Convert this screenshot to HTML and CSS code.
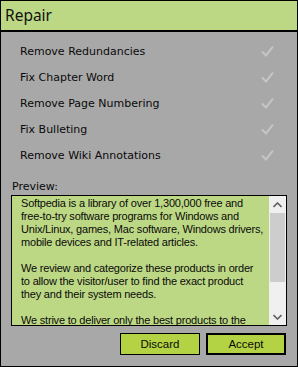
FILE: index.html
```html
<!DOCTYPE html>
<html>
<head>
<meta charset="utf-8">
<link rel="stylesheet" href="styles.css">
</head>
<body>
<div class="window">
  <div class="titlebar">Repair</div>
  <div class="options">
    <div class="option"><span>Remove Redundancies</span><svg class="check" width="13" height="12" viewBox="0 0 13 12"><polyline points="1,6.5 5,10.5 12,1.5" /></svg></div>
    <div class="option"><span>Fix Chapter Word</span><svg class="check" width="13" height="12" viewBox="0 0 13 12"><polyline points="1,6.5 5,10.5 12,1.5" /></svg></div>
    <div class="option"><span>Remove Page Numbering</span><svg class="check" width="13" height="12" viewBox="0 0 13 12"><polyline points="1,6.5 5,10.5 12,1.5" /></svg></div>
    <div class="option"><span>Fix Bulleting</span><svg class="check" width="13" height="12" viewBox="0 0 13 12"><polyline points="1,6.5 5,10.5 12,1.5" /></svg></div>
    <div class="option"><span>Remove Wiki Annotations</span><svg class="check" width="13" height="12" viewBox="0 0 13 12"><polyline points="1,6.5 5,10.5 12,1.5" /></svg></div>
  </div>
  <div class="preview-label">Preview:</div>
  <div class="preview">
    <div class="preview-text">Softpedia is a library of over 1,300,000 free and<br>free-to-try software programs for Windows and<br>Unix/Linux, games, Mac software, Windows drivers,<br>mobile devices and IT-related articles.<br><br>We review and categorize these products in order<br>to allow the visitor/user to find the exact product<br>they and their system needs.<br><br>We strive to deliver only the best products to the</div>
    <div class="scrollbar">
      <div class="sb-btn"><svg width="9" height="6" viewBox="0 0 9 6"><polyline points="0.5,5 4.5,1 8.5,5" /></svg></div>
      <div class="sb-track"><div class="sb-thumb"></div></div>
      <div class="sb-btn"><svg width="9" height="6" viewBox="0 0 9 6"><polyline points="0.5,1 4.5,5 8.5,1" /></svg></div>
    </div>
  </div>
  <div class="buttons">
    <div class="btn">Discard</div>
    <div class="btn btn-default">Accept</div>
  </div>
</div>
</body>
</html>
```

FILE: styles.css
```css
html, body {
  margin: 0;
  padding: 0;
}
.window {
  width: 298px;
  height: 367px;
  box-sizing: border-box;
  border: 1px solid #000;
  background: #a8a8a8;
  display: flex;
  flex-direction: column;
}
.titlebar {
  box-sizing: border-box;
  height: 31px;
  border-bottom: 2px solid #000;
  background: #bdd885;
  font-family: "Noto Sans", "Open Sans", sans-serif;
  font-size: 15.5px;
  color: #111;
  padding-left: 4px;
  padding-bottom: 2px;
  display: flex;
  align-items: center;
}
.options {
  padding-top: 6px;
  display: flex;
  flex-direction: column;
}
.option {
  height: 26px;
  display: flex;
  align-items: center;
  justify-content: space-between;
  padding: 0 23px 0 19px;
  font-family: "DejaVu Sans", sans-serif;
  font-size: 11px;
  color: #0a0a0a;
}
.check polyline {
  fill: none;
  stroke: #c6c6c6;
  stroke-width: 2;
}
.preview-label {
  margin-top: 11px;
  padding-left: 11px;
  height: 16px;
  line-height: 16px;
  font-family: "DejaVu Sans", sans-serif;
  font-size: 11px;
  color: #0a0a0a;
}
.preview {
  margin: 0 10px 0 10px;
  height: 131px;
  box-sizing: border-box;
  border: 1px solid #000;
  background: #bdd885;
  display: flex;
}
.preview-text {
  flex: 1;
  overflow: hidden;
  white-space: nowrap;
  padding: 1px 0 0 9px;
  font-family: "Liberation Sans", Arial, sans-serif;
  font-size: 11px;
  letter-spacing: -0.2px;
  line-height: 13px;
  color: #0a0a0a;
}
.scrollbar {
  width: 17px;
  background: #f0f0f0;
  display: flex;
  flex-direction: column;
}
.sb-btn {
  height: 17px;
  display: flex;
  align-items: center;
  justify-content: center;
}
.sb-btn polyline {
  fill: none;
  stroke: #606060;
  stroke-width: 1.6;
}
.sb-track {
  flex: 1;
  padding: 0 1px;
}
.sb-thumb {
  height: 69px;
  background: #cdcdcd;
}
.buttons {
  margin-top: 7px;
  padding-right: 11px;
  display: flex;
  justify-content: flex-end;
  gap: 6px;
}
.btn {
  width: 80px;
  height: 22px;
  box-sizing: border-box;
  border: 1px solid #000;
  background: #b4d344;
  display: flex;
  align-items: center;
  justify-content: center;
  font-family: "Liberation Sans", Arial, sans-serif;
  font-size: 11.5px;
  color: #0a0a0a;
}
.btn-default {
  border-width: 2px;
}
```
